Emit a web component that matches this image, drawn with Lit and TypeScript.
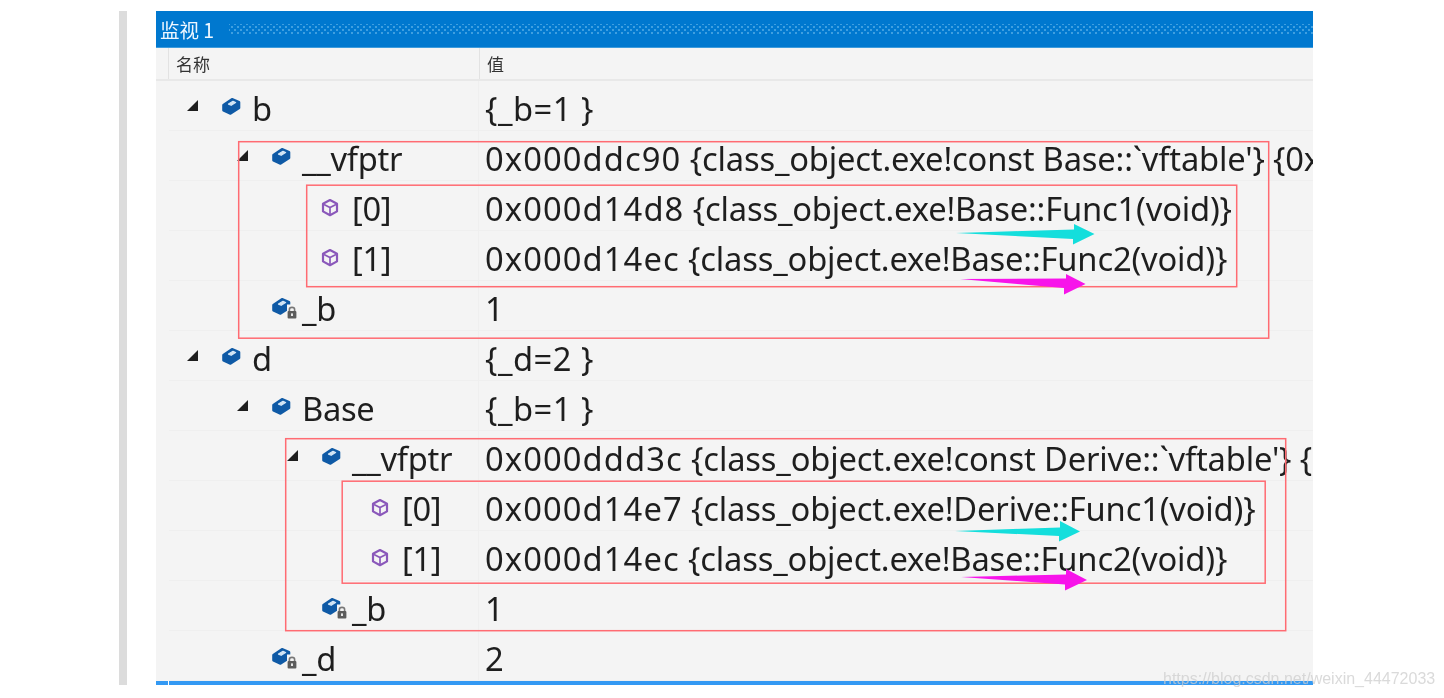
import { LitElement, html, css, svg } from "lit";
import { customElement } from "lit/decorators.js";

type Row = { level: number; open?: boolean; icon: "obj" | "field" | "priv"; name: string; addr?: string; value: string };

const rows: Row[] = [
  { level: 0, open: true, icon: "obj", name: "b", value: "{_b=1 }" },
  { level: 1, open: true, icon: "obj", name: "__vfptr", addr: "0x000ddc90", value: " {class_object.exe!const Base::`vftable'} {0x" },
  { level: 2, icon: "field", name: "[0]", addr: "0x000d14d8", value: " {class_object.exe!Base::Func1(void)}" },
  { level: 2, icon: "field", name: "[1]", addr: "0x000d14ec", value: " {class_object.exe!Base::Func2(void)}" },
  { level: 1, icon: "priv", name: "_b", value: "1" },
  { level: 0, open: true, icon: "obj", name: "d", value: "{_d=2 }" },
  { level: 1, open: true, icon: "obj", name: "Base", value: "{_b=1 }" },
  { level: 2, open: true, icon: "obj", name: "__vfptr", addr: "0x000ddd3c", value: " {class_object.exe!const Derive::`vftable'} {" },
  { level: 3, icon: "field", name: "[0]", addr: "0x000d14e7", value: " {class_object.exe!Derive::Func1(void)}" },
  { level: 3, icon: "field", name: "[1]", addr: "0x000d14ec", value: " {class_object.exe!Base::Func2(void)}" },
  { level: 2, icon: "priv", name: "_b", value: "1" },
  { level: 1, icon: "priv", name: "_d", value: "2" },
];

const cube = svg`<path d="M1.5 7.6 L10 1.8 L17 4.8 L17 10.4 L8.5 16 L1.5 12.8 Z" fill="#0f5aa6" stroke="#0f5aa6" stroke-width="2.6" stroke-linejoin="round"/>
  <path d="M6.5 6.6 L11 3.8 L13.6 5 L9.2 7.8 Z" fill="#d3e5f5" stroke="#d3e5f5" stroke-width="1.2" stroke-linejoin="round"/>`;

const iconObj = html`<svg class="ico" viewBox="0 0 24 21">
  <g transform="translate(0 2.5)">${cube}</g></svg>`;
const iconField = html`<svg class="ico" viewBox="0 0 24 21">
  <g transform="translate(0 4)" fill="none" stroke="#8a58ba">
    <path d="M8 1 L15 4.8 L15 12.4 L8 16.2 L1 12.4 L1 4.8 Z" stroke-width="2.2" stroke-linejoin="round"/>
    <path d="M2 5.4 L8 8.6 L14 5.4 M8 8.6 L8 15" stroke-width="1.7"/>
  </g></svg>`;
const iconPriv = html`<svg class="ico" viewBox="0 0 24 21">
  <g transform="translate(0 2.5)">${cube}</g>
  <path d="M15 9.5 h11 v14 h-11 z" fill="#f4f4f4"/>
  <path d="M17.4 17 L17.4 14.4 Q17.4 12.4 20 12.4 Q22.6 12.4 22.6 14.4 L22.6 17" fill="none" stroke="#777" stroke-width="1.6"/>
  <rect x="15.6" y="16" width="8.8" height="7.6" rx="1" fill="#5c5c5c"/>
  <rect x="19" y="18.4" width="2" height="2.6" fill="#e6e6e6"/>
</svg>`;

const marks = svg`
  <rect class="box" x="238.7" y="141.7" width="1030" height="196.5"/>
  <rect class="box" x="306.7" y="185.2" width="930" height="101.5"/>
  <rect class="box" x="285.7" y="438.7" width="1000" height="192"/>
  <rect class="box" x="342.2" y="481.2" width="923" height="102"/>
  <polygon fill="#14dedc" points="956,233 1074,229.5 1074,224 1094.5,234 1073,244.5 1073,239"/>
  <polygon fill="#f714ea" points="960,279 1066,278.5 1066,274 1085.5,284 1064,294.5 1064,288"/>
  <polygon fill="#14dedc" points="955,531 1060,527.5 1060,521 1080,531.5 1059,541.5 1059,536"/>
  <polygon fill="#f714ea" points="961,577 1066,574.5 1066,569 1087,580 1065,590.5 1065,584.5"/>
`;

@customElement("app-root")
export class AppRoot extends LitElement {
  static styles = css`
    :host {
      display: block;
      width: 1444px;
      height: 698px;
      background: #fff;
      overflow: hidden;
      position: relative;
      font-family: "Noto Sans", "Noto Sans CJK SC", sans-serif;
    }
    .page {
      display: flex;
      padding: 11px 0 0 119px;
      height: 674px;
    }
    .rail { width: 8px; background: #dcdcdc; margin-right: 29px; }
    .panel {
      width: 1157px;
      height: 674px;
      background: #f4f4f4;
      position: relative;
      overflow: hidden;
      display: flex;
      flex-direction: column;
      color: #1e1e1e;
      filter: blur(0.4px);
    }
    .title {
      height: 37px;
      box-sizing: border-box;
      flex: none;
      background: #0078cf;
      border-bottom: 1px solid #3d9bdc;
      color: #eef7ff;
      display: flex;
      align-items: center;
      padding-left: 4px;
      gap: 15px;
      font-size: 19.5px;
      font-family: "Noto Sans CJK SC", sans-serif;
    }
    .dots {
      flex: 1;
      height: 10px;
      background-color: #0078cf;
      background-image:
        radial-gradient(circle, #3f9fe0 1px, transparent 1.2px),
        radial-gradient(circle, #3f9fe0 1px, transparent 1.2px);
      background-size: 6px 6px;
      background-position: 0 0, 3px 3px;
    }
    .head {
      height: 33px;
      flex: none;
      display: grid;
      grid-template-columns: 323px 1fr;
      box-sizing: border-box;
      border-bottom: 2px solid #e8e8e8;
      font-size: 17px;
      color: #333;
      font-family: "Noto Sans CJK SC", sans-serif;
    }
    .head div { display: flex; align-items: center; }
    .head .n { margin-left: 12px; border-left: 1px solid #e2e2e2; padding-left: 7px; }
    .head .v { border-left: 1px solid #e2e2e2; padding-left: 7px; }
    .rows { flex: none; }
    .row {
      height: 50px;
      box-sizing: border-box;
      margin-left: 13px;
      display: grid;
      grid-template-columns: 310px 1fr;
      border-bottom: 1px solid #efefef;
      font-size: 32.7px;
      white-space: pre;
    }
    .cell-name { display: flex; align-items: center; border-right: 1px solid #efefef; }
    .cell-val { padding-left: 6px; display: flex; align-items: center; overflow: hidden; }
    .txt { position: relative; top: 3px; }
    .name { letter-spacing: -0.3px; }
    .short { letter-spacing: 0.5px; }
    .addr { letter-spacing: 1.1px; }
    .rest { letter-spacing: -0.17px; }
    .exp { width: 11px; height: 11px; flex: none; margin-right: 24px; }
    .exp polygon { fill: #1e1e1e; }
    .ico { width: 24px; height: 21px; flex: none; margin-right: 6px; overflow: visible; }
    .foot { height: 4px; flex: none; background: #3399f3; margin-top: auto; display: flex; }
    .foot i { display: block; width: 1px; background: #fff; margin-left: 12px; }
    .marks { position: absolute; left: 0; top: 0; width: 1157px; height: 674px; pointer-events: none; }
    .box { fill: none; stroke: #ff6b72; stroke-width: 1.5; }
    .wm {
      position: absolute;
      left: 1163px;
      top: 670px;
      font-size: 16px;
      font-family: "Liberation Sans", sans-serif;
      color: rgba(205, 205, 205, 0.75);
      white-space: nowrap;
      filter: blur(0.4px);
    }
  `;

  private renderRow(r: Row) {
    const pad = 18 + r.level * 50;
    return html`<div class="row">
      <div class="cell-name" style="padding-left:${pad}px">
        ${r.open
          ? html`<svg class="exp" viewBox="0 0 11 11"><polygon points="11,0 11,11 0,11"/></svg>`
          : html`<span class="exp"></span>`}
        ${r.icon === "obj" ? iconObj : r.icon === "field" ? iconField : iconPriv}
        <span class="txt name">${r.name}</span>
      </div>
      <div class="cell-val">
        ${r.addr
          ? html`<span class="txt"><span class="addr">${r.addr}</span><span class="rest">${r.value}</span></span>`
          : html`<span class="txt short">${r.value}</span>`}
      </div>
    </div>`;
  }

  render() {
    return html`<div class="page">
        <div class="rail"></div>
        <div class="panel">
          <div class="title"><span>监视 1</span><div class="dots"></div></div>
          <div class="head"><div class="n">名称</div><div class="v">值</div></div>
          <div class="rows">${rows.map((r) => this.renderRow(r))}</div>
          <div class="foot"><i></i></div>
          <svg class="marks" viewBox="156 11 1157 674">${marks}</svg>
        </div>
      </div>
      <div class="wm">https://blog.csdn.net/weixin_44472033</div>`;
  }
}
